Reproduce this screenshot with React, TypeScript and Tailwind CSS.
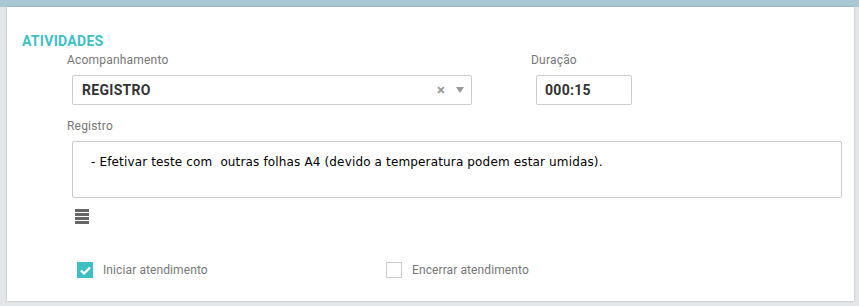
import React from "react";

export default function App() {
  return (
    <div
      className="w-[859px] h-[306px] bg-[#e3e7ea] flex flex-col overflow-hidden"
      style={{ fontFamily: "Roboto, 'Liberation Sans', sans-serif" }}
    >
      <div className="h-[7px] bg-[#abc6d4] shrink-0" />
      <div className="flex-1 pl-[7px] pr-[6px] pb-[5px] flex">
        <div className="flex-1 bg-white shadow-[0_0_2px_rgba(0,0,0,0.25)] pt-[26px] pl-[15px] pr-[12px] flex flex-col">
          <div className="text-[14px] leading-[16px] font-bold text-[#3dbfc6] tracking-[0.3px]">
            ATIVIDADES
          </div>
          <div className="pl-[45px] pt-[3px] flex flex-col">
            <div className="flex gap-[59px]">
              <div className="flex flex-col">
                <div className="text-[12px] leading-[16px] text-[#777] tracking-[0.2px]">Acompanhamento</div>
                <div className="ml-[5px] mt-[7px] w-[400px] h-[30px] border border-[#ccc] rounded-[2px] flex items-center pl-[9px] pr-[7px]">
                  <span className="flex-1 text-[14px] font-bold text-[#333] tracking-[0.3px]">REGISTRO</span>
                  <span className="text-[15px] leading-none text-[#999] mr-[11px] font-bold">×</span>
                  <svg width="8" height="6" viewBox="0 0 8 6">
                    <path d="M0 0 L8 0 L4 6 Z" fill="#999" />
                  </svg>
                </div>
              </div>
              <div className="flex flex-col">
                <div className="text-[12px] leading-[16px] text-[#777] tracking-[0.2px]">Duração</div>
                <div className="ml-[5px] mt-[7px] w-[96px] h-[30px] border border-[#ccc] rounded-[2px] flex items-center pl-[8px]">
                  <span className="text-[14px] font-bold text-[#333] tracking-[0.3px]">000:15</span>
                </div>
              </div>
            </div>
            <div className="mt-[13px] text-[12px] leading-[16px] text-[#777] tracking-[0.2px]">Registro</div>
            <div
              className="ml-[5px] mt-[7px] w-[770px] h-[57px] border border-[#ccc] rounded-[2px] pl-[18px] pt-[12px] text-[12px] leading-[16px] text-black whitespace-pre tracking-[0.15px]"
              style={{ fontFamily: "'DejaVu Sans', sans-serif" }}
            >
              {"- Efetivar teste com  outras folhas A4 (devido a temperatura podem estar umidas)."}
            </div>
            <div className="ml-[8px] mt-[11px] w-[14px] flex flex-col gap-[1px]">
              <div className="h-[3px] bg-[#666]" />
              <div className="h-[3px] bg-[#666]" />
              <div className="h-[3px] bg-[#666]" />
              <div className="h-[3px] bg-[#666]" />
            </div>
            <div className="mt-[37px] ml-[10px] flex items-center">
              <div className="flex items-center w-[309px]">
                <div className="w-[16px] h-[16px] bg-[#3dbfc6] flex items-center justify-center">
                  <svg width="11" height="9" viewBox="0 0 11 9">
                    <path d="M1 4.5 L4 7.5 L10 1.5" stroke="white" strokeWidth="2.4" fill="none" />
                  </svg>
                </div>
                <span className="ml-[10px] text-[12px] text-[#777] tracking-[0.1px]">Iniciar atendimento</span>
              </div>
              <div className="flex items-center">
                <div className="w-[16px] h-[16px] border border-[#ccc] bg-white" />
                <span className="ml-[10px] text-[12px] text-[#777] tracking-[0.1px]">Encerrar atendimento</span>
              </div>
            </div>
          </div>
        </div>
      </div>
    </div>
  );
}
